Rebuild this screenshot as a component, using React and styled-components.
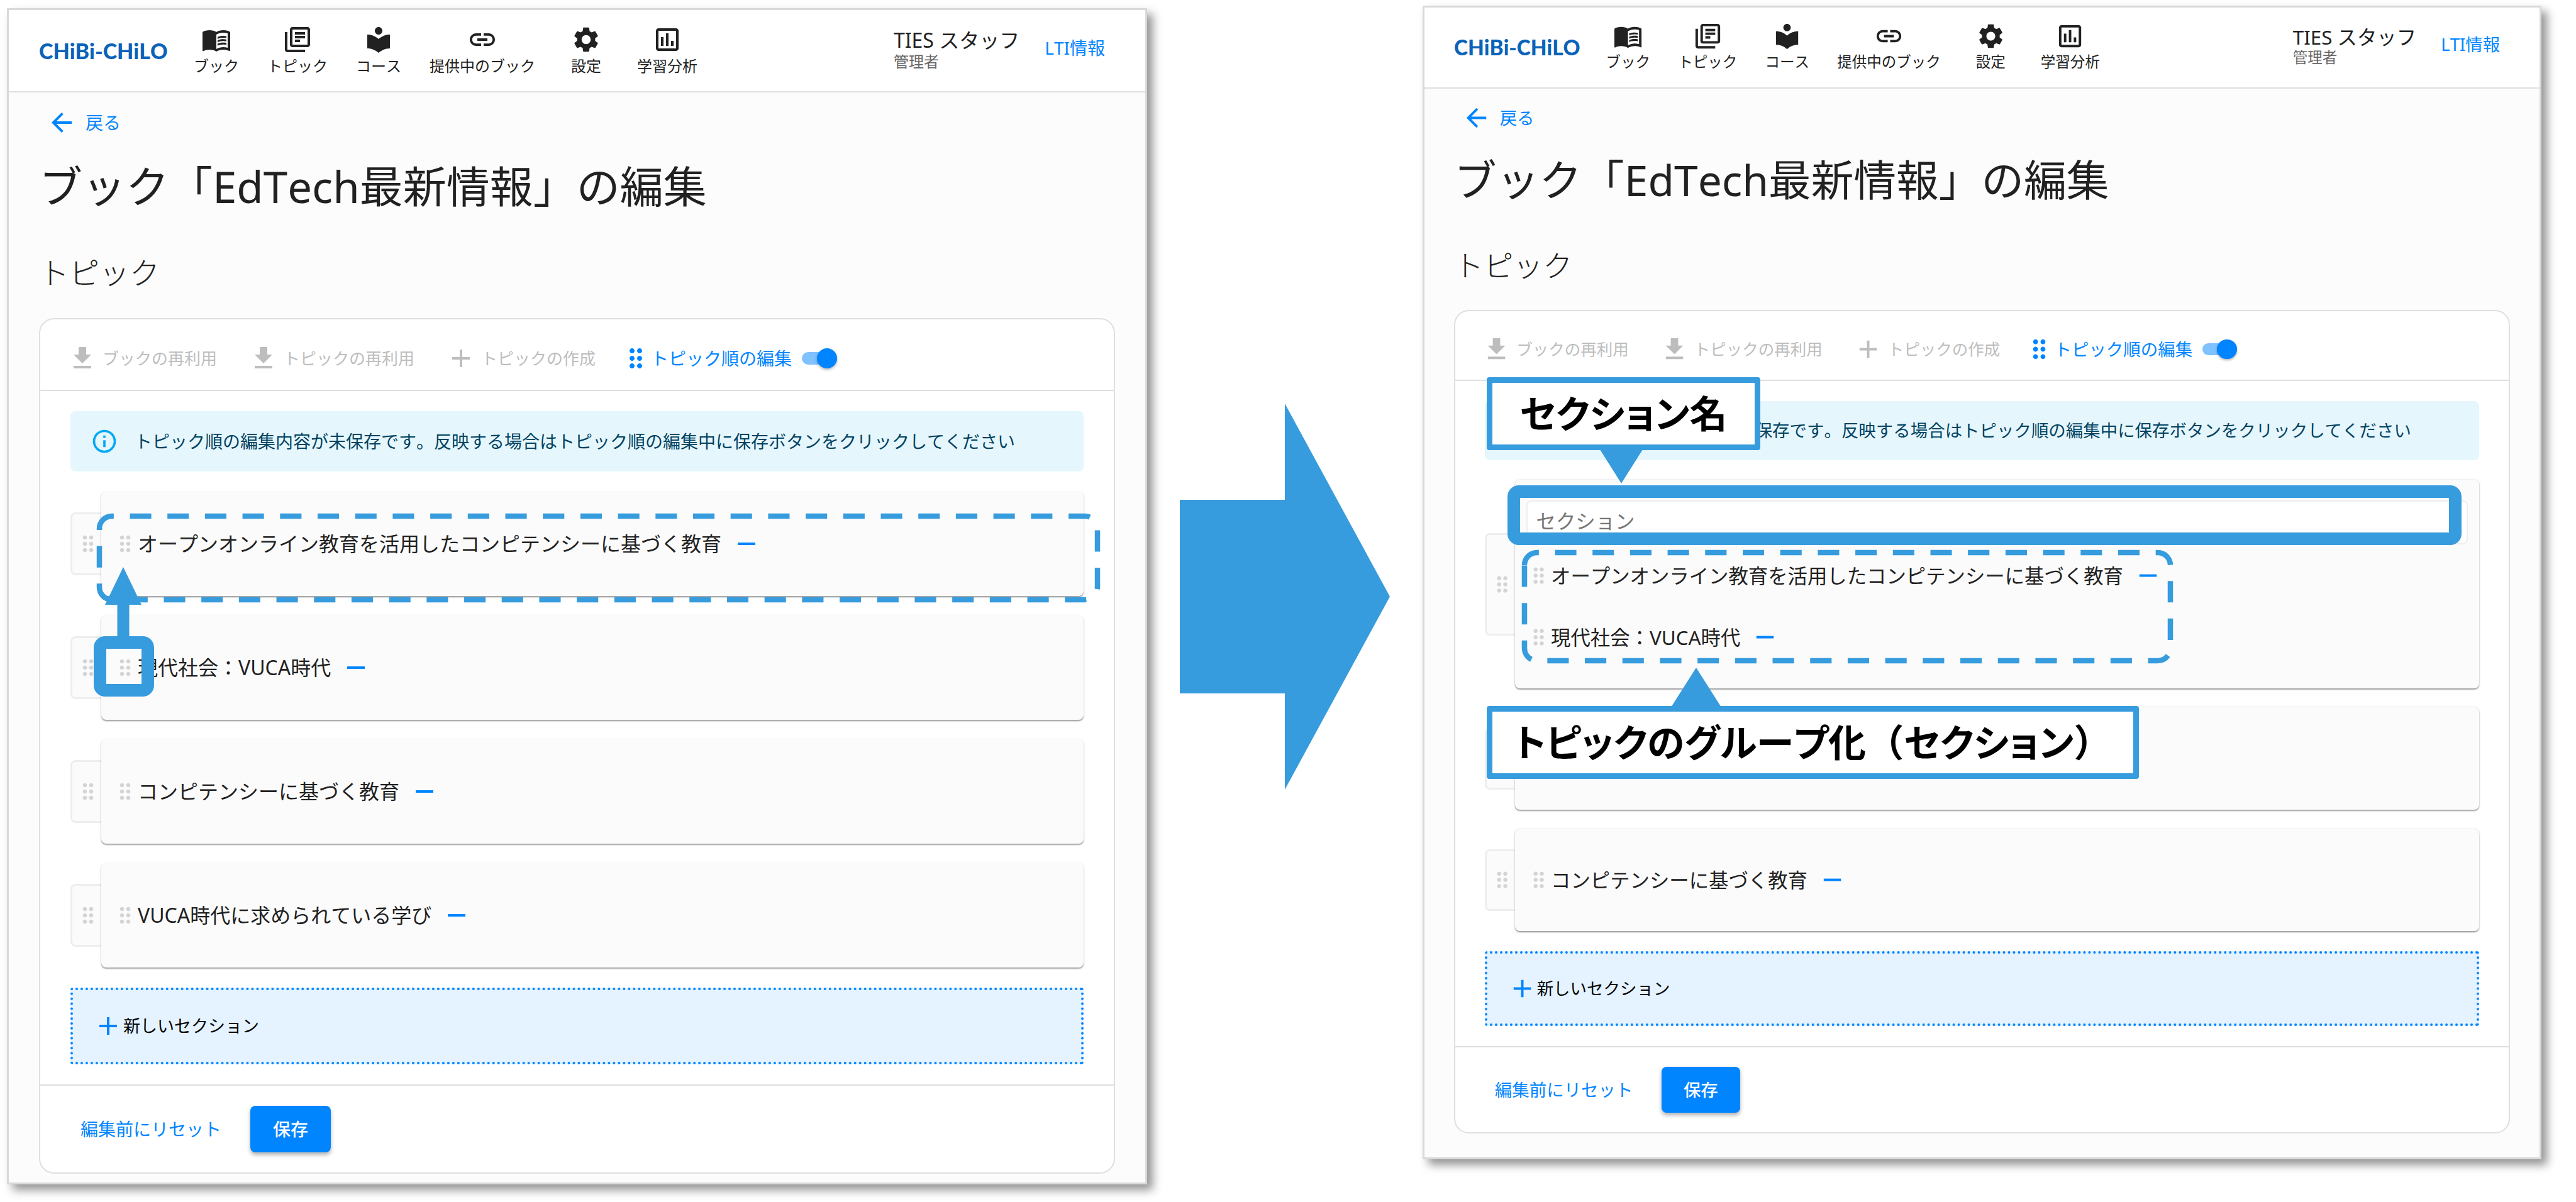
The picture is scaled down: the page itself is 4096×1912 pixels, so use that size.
import React, { useId } from "react";
import styled, { createGlobalStyle, css } from "styled-components";
import {
  MdMenuBook,
  MdOutlineLibraryBooks,
  MdLocalLibrary,
  MdLink,
  MdSettings,
  MdOutlineAssessment,
  MdArrowBack,
  MdGetApp,
  MdAdd,
  MdRemove,
  MdDragIndicator,
  MdInfoOutline,
} from "react-icons/md";

const blue = "#0085ff";
const mark = "#379cdd";
const line = "#dfdfdf";

const Global = createGlobalStyle`
  *, *::before, *::after { box-sizing: border-box; }
  body {
    margin: 0;
    background: #fff;
    color: #212121;
    font-family: "Noto Sans", "Noto Sans CJK JP", sans-serif;
    font-size: 32px;
    font-kerning: none;
    line-height: 48px;
  }
  button, input { font: inherit; color: inherit; }
  svg { display: block; flex: none; }
`;

const Slide = styled.main`
  display: grid;
  grid-template-columns: 1813fr 334fr 1779fr;
  column-gap: 52px;
  align-items: start;
  padding: 9px 55px 27px 11px;
`;

const Figure = styled.section`
  position: relative;
  min-width: 0;
  margin-top: ${(p) => (p.$drop ? "4px" : "0")};
`;

/* Browsers floor zoomed border widths, so the reduced screen asks for one pixel more. */
const Screen = styled.div`
  --hair: 2px;
  --edge: 3px;
  --dots: 4px;
  ${(p) =>
    p.$reduced &&
    css`
      --hair: 3px;
      --edge: 4px;
      --dots: 5px;
      zoom: 0.981;
    `}
  border: var(--edge) solid #d9d9d9;
  background: #fcfcfc;
  box-shadow: 9px 9px 14px rgba(0, 0, 0, 0.42);
`;

const Header = styled.header`
  display: flex;
  align-items: center;
  height: 131px;
  padding: 0 64px 0 48px;
  background: #fff;
  border-bottom: var(--hair) solid ${line};
`;

const Logo = styled.a`
  width: 202px;
  color: #0a63b9;
  font-family: Lato, sans-serif;
  font-size: 34px;
  font-weight: 900;
  line-height: 48px;
  white-space: nowrap;
  text-decoration: none;
`;

const Nav = styled.nav`
  display: flex;
  gap: 45px;
  margin-left: 44px;
`;

const NavLink = styled.a`
  display: flex;
  flex-direction: column;
  align-items: center;
  min-width: 72px;
  color: #212121;
  font-size: 24px;
  line-height: 36px;
  text-decoration: none;
  white-space: nowrap;
`;

const User = styled.div`
  display: flex;
  align-items: center;
  gap: 40px;
  margin-left: auto;
  padding-bottom: 10px;
  white-space: nowrap;
`;

const UserName = styled.div`
  line-height: 44px;
  small {
    display: block;
    color: #666;
    font-size: 24px;
    line-height: 24px;
  }
`;

const TextLink = styled.a`
  color: ${blue};
  font-size: 28px;
  text-decoration: none;
`;

const Page = styled.div`
  padding: 24px 48px ${(p) => (p.$roomy ? "38px" : "14px")};
`;

const BackLink = styled(TextLink)`
  display: flex;
  align-items: center;
  gap: 14px;
  padding-left: 12px;
`;

const Title = styled.h1`
  margin: 35px 0 0;
  font-size: 69px;
  font-weight: 400;
  line-height: 84px;
  white-space: nowrap;
`;

const Subtitle = styled.h2`
  margin: 64px 0 0;
  font-size: 48px;
  font-weight: 300;
  line-height: 64px;
`;

const Card = styled.div`
  margin-top: 40px;
  border: var(--hair) solid ${line};
  border-radius: 24px;
  background: #fff;
`;

const Toolbar = styled.div`
  display: flex;
  align-items: center;
  gap: 40px;
  height: 114px;
  padding: 12px 43px 0;
  border-bottom: var(--hair) solid ${line};
`;

const Tools = styled.div`
  display: flex;
  gap: 50px;
`;

const ToolButton = styled.button`
  display: flex;
  align-items: center;
  gap: 8px;
  padding: 0;
  border: 0;
  background: none;
  color: #bdbdbd;
  font-size: 26px;
  white-space: nowrap;
`;

const SwitchLabel = styled.label`
  display: flex;
  align-items: center;
  color: ${blue};
  font-size: 28px;
  white-space: nowrap;
`;

const Switch = styled.input`
  appearance: none;
  display: flex;
  align-items: center;
  width: 56px;
  height: 20px;
  margin: 0 0 0 16px;
  border-radius: 10px;
  background: #80c2ff;
  &::before {
    content: "";
    width: 32px;
    height: 32px;
    margin-left: 24px;
    border-radius: 50%;
    background: ${blue};
    box-shadow: 0 2px 4px rgba(0, 0, 0, 0.3);
    flex: none;
  }
`;

const Body = styled.div`
  padding: 32px 48px;
`;

const Alert = styled.div`
  display: flex;
  align-items: center;
  gap: 26px;
  height: 96px;
  padding: 0 32px;
  border-radius: 8px;
  background: #e5f6fd;
  color: #014361;
  font-size: 28px;
  white-space: nowrap;
  svg { color: #03a9f4; }
`;

const Sections = styled.ul`
  display: grid;
  gap: 31px;
  margin: 32px 0;
  padding: 0;
  list-style: none;
`;

const Section = styled.li`
  display: flex;
  align-items: center;
`;

const Tab = styled.div`
  display: grid;
  place-items: center;
  width: 49px;
  height: ${(p) => (p.$tall ? "166px" : "100px")};
  padding-left: 4px;
  border: var(--edge) solid #eee;
  border-right: 0;
  border-radius: 8px 0 0 8px;
  background: #fbfbfb;
  color: #d4d4d4;
`;

const SectionBox = styled.div`
  flex: 1;
  min-width: 0;
  padding: 33px 18px;
  border-radius: 8px;
  background: #fbfbfb;
  box-shadow: 0 2px 2px rgba(0, 0, 0, 0.34), 0 1px 4px rgba(0, 0, 0, 0.1);
`;

const SectionInput = styled.input`
  display: block;
  width: 100%;
  height: 72px;
  padding: 0 14px 6px;
  border: var(--hair) solid #eee;
  border-radius: 8px;
  background: #fff;
  &::placeholder { color: #757575; opacity: 1; }
`;

const Topic = styled.div`
  display: flex;
  align-items: center;
  height: 100px;
  white-space: nowrap;
  > svg { color: #d4d4d4; }
`;

const IconButton = styled.button`
  margin-left: 16px;
  padding: 0;
  border: 0;
  background: none;
  color: ${blue};
`;

const NewSection = styled.button`
  display: flex;
  align-items: center;
  width: 100%;
  height: 122px;
  padding: 0 32px;
  border: var(--dots) dotted ${blue};
  border-radius: 4px;
  background: #e5f2ff;
  color: #000;
  font-size: 27px;
  svg { color: ${blue}; }
`;

const Footer = styled.div`
  display: flex;
  align-items: center;
  gap: 30px;
  padding: 32px 48px;
  border-top: var(--hair) solid ${line};
`;

const Button = styled.button`
  height: 74px;
  padding: 0 16px;
  border: 0;
  border-radius: 8px;
  background: none;
  color: ${blue};
  font-size: 28px;
  white-space: nowrap;
  ${(p) =>
    p.$filled &&
    css`
      padding: 0 36px;
      background: ${blue};
      color: #fff;
      font-weight: 500;
      box-shadow: 0 4px 6px rgba(0, 0, 0, 0.3);
    `}
`;

const BigArrow = styled.svg`
  width: 100%;
  margin-top: 633px;
  fill: ${mark};
`;

const Overlay = styled.svg`
  position: absolute;
  top: 0;
  left: 0;
  overflow: visible;
  pointer-events: none;
`;

const Frame = styled.div`
  position: absolute;
  left: ${(p) => p.$x}px;
  top: ${(p) => p.$y}px;
  width: ${(p) => p.$w}px;
  height: ${(p) => p.$h}px;
  border: 20px solid ${mark};
  border-radius: 18px;
`;

const Callout = styled.div`
  position: absolute;
  left: 102px;
  top: ${(p) => p.$y}px;
  display: flex;
  align-items: center;
  justify-content: center;
  width: ${(p) => p.$w}px;
  height: 116px;
  border: 9px solid ${mark};
  border-radius: 4px;
  background: #fff;
  color: #000;
  font-size: 60px;
  font-weight: 700;
  line-height: 96px;
  font-feature-settings: "palt";
  white-space: nowrap;
`;

const FullWidth = styled.span`
  font-feature-settings: normal;
`;

const nav = [
  [MdMenuBook, "ブック"],
  [MdOutlineLibraryBooks, "トピック"],
  [MdLocalLibrary, "コース"],
  [MdLink, "提供中のブック"],
  [MdSettings, "設定"],
  [MdOutlineAssessment, "学習分析"],
];

const tools = [
  [MdGetApp, "ブックの再利用"],
  [MdGetApp, "トピックの再利用"],
  [MdAdd, "トピックの作成"],
];

function TopicRow({ title }) {
  return (
    <Topic>
      <MdDragIndicator size={40} />
      {title && (
        <>
          <span>{title}</span>
          <IconButton type="button" aria-label="remove">
            <MdRemove size={48} />
          </IconButton>
        </>
      )}
    </Topic>
  );
}

function EditorScreen({ sections, reduced }) {
  const id = useId();
  return (
    <Screen $reduced={reduced}>
      <Header>
        <Logo href="#">CHiBi-CHiLO</Logo>
        <Nav>
          {nav.map(([Icon, label]) => (
            <NavLink href="#" key={label}>
              <Icon size={48} />
              {label}
            </NavLink>
          ))}
        </Nav>
        <User>
          <UserName>
            TIES スタッフ
            <small>管理者</small>
          </UserName>
          <TextLink href="#">LTI情報</TextLink>
        </User>
      </Header>
      <Page $roomy={reduced}>
        <BackLink href="#">
          <MdArrowBack size={48} />
          戻る
        </BackLink>
        <Title>ブック「EdTech最新情報」の編集</Title>
        <Subtitle>トピック</Subtitle>
        <Card>
          <Toolbar>
            <Tools>
              {tools.map(([Icon, label]) => (
                <ToolButton type="button" key={label}>
                  <Icon size={48} />
                  {label}
                </ToolButton>
              ))}
            </Tools>
            <SwitchLabel htmlFor={id}>
              <MdDragIndicator size={48} />
              トピック順の編集
              <Switch id={id} type="checkbox" role="switch" defaultChecked />
            </SwitchLabel>
          </Toolbar>
          <Body>
            <Alert role="status">
              <MdInfoOutline size={44} />
              トピック順の編集内容が未保存です。反映する場合はトピック順の編集中に保存ボタンをクリックしてください
            </Alert>
            <Sections>
              {sections.map((section, i) => (
                <Section key={i}>
                  <Tab $tall={section.topics.length > 1}>
                    <MdDragIndicator size={40} />
                  </Tab>
                  <SectionBox>
                    {section.named && (
                      <SectionInput placeholder="セクション" aria-label="セクション" />
                    )}
                    {section.topics.map((t, j) => (
                      <TopicRow key={j} title={t} />
                    ))}
                  </SectionBox>
                </Section>
              ))}
            </Sections>
            <NewSection type="button">
              <MdAdd size={48} />
              新しいセクション
            </NewSection>
          </Body>
          <Footer>
            <Button type="button">編集前にリセット</Button>
            <Button type="button" $filled>
              保存
            </Button>
          </Footer>
        </Card>
      </Page>
    </Screen>
  );
}

const before = [
  { topics: ["オープンオンライン教育を活用したコンピテンシーに基づく教育"] },
  { topics: ["現代社会：VUCA時代"] },
  { topics: ["コンピテンシーに基づく教育"] },
  { topics: ["VUCA時代に求められている学び"] },
];

const after = [
  {
    named: true,
    topics: [
      "オープンオンライン教育を活用したコンピテンシーに基づく教育",
      "現代社会：VUCA時代",
    ],
  },
  { topics: [""] },
  { topics: ["コンピテンシーに基づく教育"] },
];

/* Rounded dashed outline, drawn clockwise from the lower end of its top left corner. */
function DashedOutline({ x, y, w, h }) {
  const r = 20;
  return (
    <path
      d={`M${x} ${y + r}a${r} ${r} 0 0 1 ${r} ${-r}h${w - 2 * r}a${r} ${r} 0 0 1 ${r} ${r}v${h - 2 * r}a${r} ${r} 0 0 1 ${-r} ${r}h${2 * r - w}a${r} ${r} 0 0 1 ${-r} ${-r}z`}
      fill="none"
      stroke={mark}
      strokeWidth="8.5"
      strokeDasharray="34.1 25.6"
    />
  );
}

export default function App() {
  return (
    <>
      <Global />
      <Slide>
        <Figure $drop>
          <EditorScreen sections={before} />
          <Overlay width="1813" height="1872" aria-hidden="true">
            <DashedOutline x={147} y={808} w={1587} h={133} />
            <path d="M185 889l29 60h-19.500v52h-19v-52h-19.500z" fill={mark} />
          </Overlay>
          <Frame $x={138} $y={999} $w={96} $h={96} />
        </Figure>
        <BigArrow viewBox="0 0 334 614" aria-hidden="true">
          <path d="M0 153H167V0L334 307L167 614V461H0z" />
        </BigArrow>
        <Figure>
          <EditorScreen sections={after} reduced />
          <Overlay width="1779" height="1836" aria-hidden="true">
            <DashedOutline x={162} y={870} w={1027} h={172} />
            <path d="M282 706h68l-34 54z" fill={mark} />
            <path d="M395 1116h80l-40-63z" fill={mark} />
          </Overlay>
          <Frame $x={135} $y={763} $w={1517} $h={95} />
          <Callout $y={591} $w={435}>セクション名</Callout>
          <Callout $y={1114} $w={1037}>
            トピックのグループ化<FullWidth>（</FullWidth>セクション<FullWidth>）</FullWidth>
          </Callout>
        </Figure>
      </Slide>
    </>
  );
}
